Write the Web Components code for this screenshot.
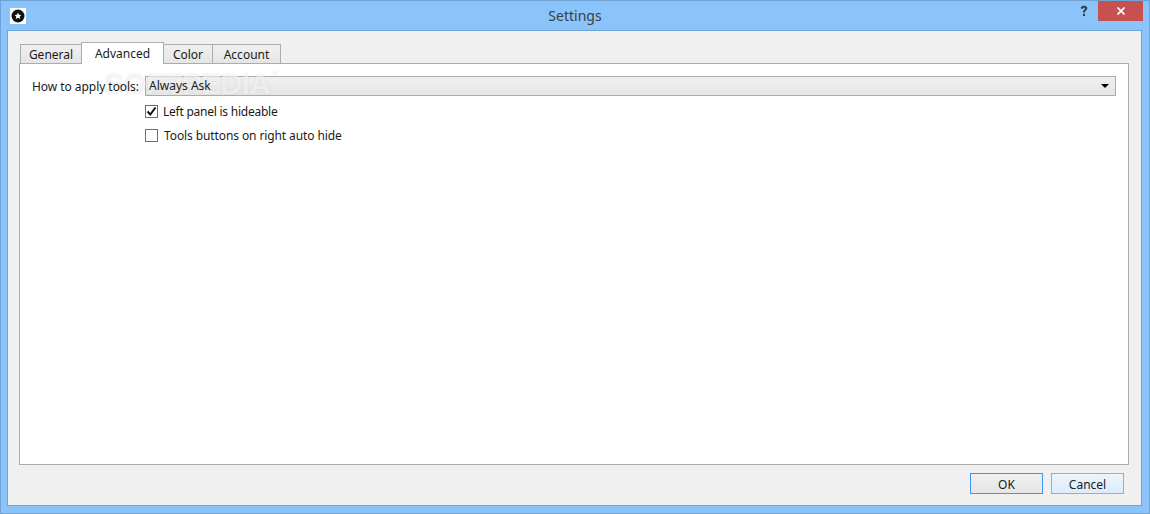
<!DOCTYPE html>
<html>
<head>
<meta charset="utf-8">
<title>Settings</title>
<style>
  html, body { margin: 0; padding: 0; background: #8ac4fa; }
  body { width: 1150px; height: 514px; overflow: hidden; }
</style>
</head>
<body>
<settings-window heading="Settings">
  <settings-tabs slot="tabs"></settings-tabs>
  <settings-form></settings-form>
  <dialog-button slot="buttons" focused>OK</dialog-button>
  <dialog-button slot="buttons" hover>Cancel</dialog-button>
</settings-window>

<script>
class SettingsWindow extends HTMLElement {
  constructor() {
    super();
    this.attachShadow({ mode: "open" });
  }

  connectedCallback() {
    const heading = this.getAttribute("heading") || "";
    this.shadowRoot.innerHTML = `
      <style>
        :host {
          display: flex;
          flex-direction: column;
          box-sizing: border-box;
          width: 1150px;
          height: 514px;
          background: #8ac4fa;
          border: 1px solid #6ea3d3;
          font-family: "Noto Sans", "DejaVu Sans", sans-serif;
          font-size: 12px;
          color: #1a1a1a;
        }
        .titlebar {
          flex: none;
          height: 29px;
          display: flex;
          position: relative;
          align-items: flex-start;
          justify-content: space-between;
        }
        .icon {
          width: 16px;
          height: 16px;
          margin: 7px 0 0 9px;
        }
        .title {
          position: absolute;
          left: 0;
          right: 0;
          top: 6px;
          text-align: center;
          font-size: 14px;
          line-height: 18px;
          color: #3a3f45;
        }
        .controls {
          display: flex;
          align-items: flex-start;
        }
        .help {
          margin: 4px 10px 0 0;
          width: 8px;
          height: 12px;
        }
        .close {
          width: 45px;
          height: 20px;
          background: #c75050;
          margin: 0 6px 0 0;
          display: flex;
          align-items: center;
          justify-content: center;
        }
        .body {
          flex: 1;
          display: flex;
          flex-direction: column;
          margin: 0 7px 7px 6px;
          padding: 12px 12px 0 11px;
          background: #f0f0f0;
          border: 1px solid #6ea3d3;
          min-height: 0;
        }
        .panel {
          flex: 1;
          min-height: 0;
          box-sizing: border-box;
          background: #fff;
          border: 1px solid #acacac;
          margin-top: -1px;
        }
        .buttons {
          flex: none;
          height: 40px;
          display: flex;
          justify-content: flex-end;
          align-items: flex-start;
          gap: 8px;
          padding: 8px 5px 0 0;
          box-sizing: border-box;
        }
      </style>
      <div class="titlebar">
        <svg class="icon" viewBox="0 0 16 16">
          <rect width="16" height="16" fill="#fff"/>
          <circle cx="8" cy="8" r="6.5" fill="#111"/>
          <path d="M8 4.6l1 2.1 2.4.2-1.7 1.6.5 2.4L8 9.7l-2.2 1.2.5-2.4-1.7-1.6 2.4-.2z" fill="#fff"/>
        </svg>
        <div class="title">${heading}</div>
        <div class="controls">
          <svg class="help" viewBox="0 0 8 12">
            <path d="M1 3.2C1 1.6 2.3 1 4 1s3 .8 3 2.3c0 1.3-.9 1.8-1.6 2.4-.5.4-.7.8-.7 1.6H3.2c0-1.2.3-1.8 1-2.4.6-.5 1-.8 1-1.5 0-.7-.5-1-1.2-1-.8 0-1.2.4-1.2 1.1z" fill="#2b3a45" stroke="#2b3a45" stroke-width="0.5"/>
            <rect x="3" y="8.8" width="2" height="2.2" fill="#2b3a45"/>
          </svg>
          <div class="close">
            <svg width="8" height="8" viewBox="0 0 8 8">
              <path d="M.5.5l7 7M7.5.5l-7 7" stroke="#fff" stroke-width="1.7"/>
            </svg>
          </div>
        </div>
      </div>
      <div class="body">
        <slot name="tabs"></slot>
        <div class="panel"><slot></slot></div>
        <div class="buttons"><slot name="buttons"></slot></div>
      </div>
    `;
  }
}

class SettingsTabs extends HTMLElement {
  constructor() {
    super();
    this.attachShadow({ mode: "open" });
    this.shadowRoot.innerHTML = `
      <style>
        :host {
          display: flex;
          align-items: flex-end;
          height: 21px;
          padding-left: 2px;
          position: relative;
          z-index: 1;
        }
        .tab {
          box-sizing: border-box;
          height: 20px;
          margin-left: -1px;
          padding-top: 1px;
          text-align: center;
          line-height: 17px;
          border: 1px solid #acacac;
          border-bottom: 1px solid #acacac;
          background: linear-gradient(#f0f0f0, #e5e5e5);
        }
        .tab:first-child { margin-left: 0; }
        .tab.active {
          height: 22px;
          background: #fff;
          border-bottom: 0;
          padding-top: 2px;
          position: relative;
        }
      </style>
      <div class="tab" style="width:62px">General</div>
      <div class="tab active" style="width:83px">Advanced</div>
      <div class="tab" style="width:50px">Color</div>
      <div class="tab" style="width:69px">Account</div>
    `;
  }
}

class SettingsForm extends HTMLElement {
  constructor() {
    super();
    this.attachShadow({ mode: "open" });
    this.shadowRoot.innerHTML = `
      <style>
        :host {
          display: grid;
          position: relative;
          grid-template-columns: 113px 1fr;
          padding: 12px 12px 0 12px;
          row-gap: 4px;
          align-items: center;
        }
        label { line-height: 20px; white-space: nowrap; letter-spacing: -0.05px; }
        .combo {
          box-sizing: border-box;
          height: 20px;
          margin-bottom: 1px;
          display: flex;
          align-items: center;
          justify-content: space-between;
          padding: 0 4px 1px 3px;
          border: 1px solid #acacac;
          background: linear-gradient(#f0f0f0, #e5e5e5);
        }
        .combo span, label { position: relative; z-index: 1; }
        .arrow {
          width: 0;
          height: 0;
          border-left: 4px solid transparent;
          border-right: 4px solid transparent;
          border-top: 4px solid #000;
          margin: 1px 2px 0 0;
        }
        .watermark {
          position: absolute;
          left: 84px;
          top: 3px;
          font: bold 30px "Liberation Sans", sans-serif;
          letter-spacing: -0.6px;
          color: rgba(255, 255, 255, 0.65);
          text-shadow: 0 0 2px rgba(0, 0, 0, 0.12);
          pointer-events: none;
        }
        .watermark sup {
          position: absolute;
          left: 168px;
          top: 2px;
          font-size: 8px;
          font-weight: normal;
          letter-spacing: 0;
          line-height: 10px;
        }
        .first { letter-spacing: -0.24px; }
        .second { letter-spacing: -0.1px; }
        .second::part(label) { margin-left: 1px; }
      </style>
      <label>How to apply tools:</label>
      <div class="combo"><span>Always Ask</span><span class="arrow"></span></div>
      <span></span>
      <check-row class="first" checked>Left panel is hideable</check-row>
      <span></span>
      <check-row class="second">Tools buttons on right auto hide</check-row>
      <div class="watermark">SOFTPEDIA<sup>®</sup></div>
    `;
  }
}

class CheckRow extends HTMLElement {
  constructor() {
    super();
    this.attachShadow({ mode: "open" });
  }

  connectedCallback() {
    const mark = this.hasAttribute("checked")
      ? `<svg width="11" height="11" viewBox="0 0 11 11"><path d="M1.5 5.5l2.8 3L9.5 1.5" fill="none" stroke="#111" stroke-width="2"/></svg>`
      : "";
    this.shadowRoot.innerHTML = `
      <style>
        :host {
          display: flex;
          align-items: center;
          gap: 5px;
          height: 20px;
        }
        .box {
          box-sizing: border-box;
          width: 13px;
          height: 13px;
          background: #fff;
          border: 1px solid #707070;
          display: flex;
          align-items: center;
          justify-content: center;
        }
      </style>
      <div class="box">${mark}</div>
      <span part="label"><slot></slot></span>
    `;
  }
}

class DialogButton extends HTMLElement {
  constructor() {
    super();
    this.attachShadow({ mode: "open" });
    this.shadowRoot.innerHTML = `
      <style>
        :host {
          display: flex;
          align-items: center;
          justify-content: center;
          box-sizing: border-box;
          width: 73px;
          height: 21px;
          padding-top: 1px;
          border: 1px solid #acacac;
          background: linear-gradient(#f0f0f0, #e5e5e5);
        }
        :host([focused]) { border-color: #3c97f2; }
        :host([hover]) {
          border-color: #7eb4ea;
          background: linear-gradient(#ecf4fc, #dcecfc);
        }
      </style>
      <slot></slot>
    `;
  }
}

customElements.define("settings-window", SettingsWindow);
customElements.define("settings-tabs", SettingsTabs);
customElements.define("settings-form", SettingsForm);
customElements.define("check-row", CheckRow);
customElements.define("dialog-button", DialogButton);
</script>
</body>
</html>
